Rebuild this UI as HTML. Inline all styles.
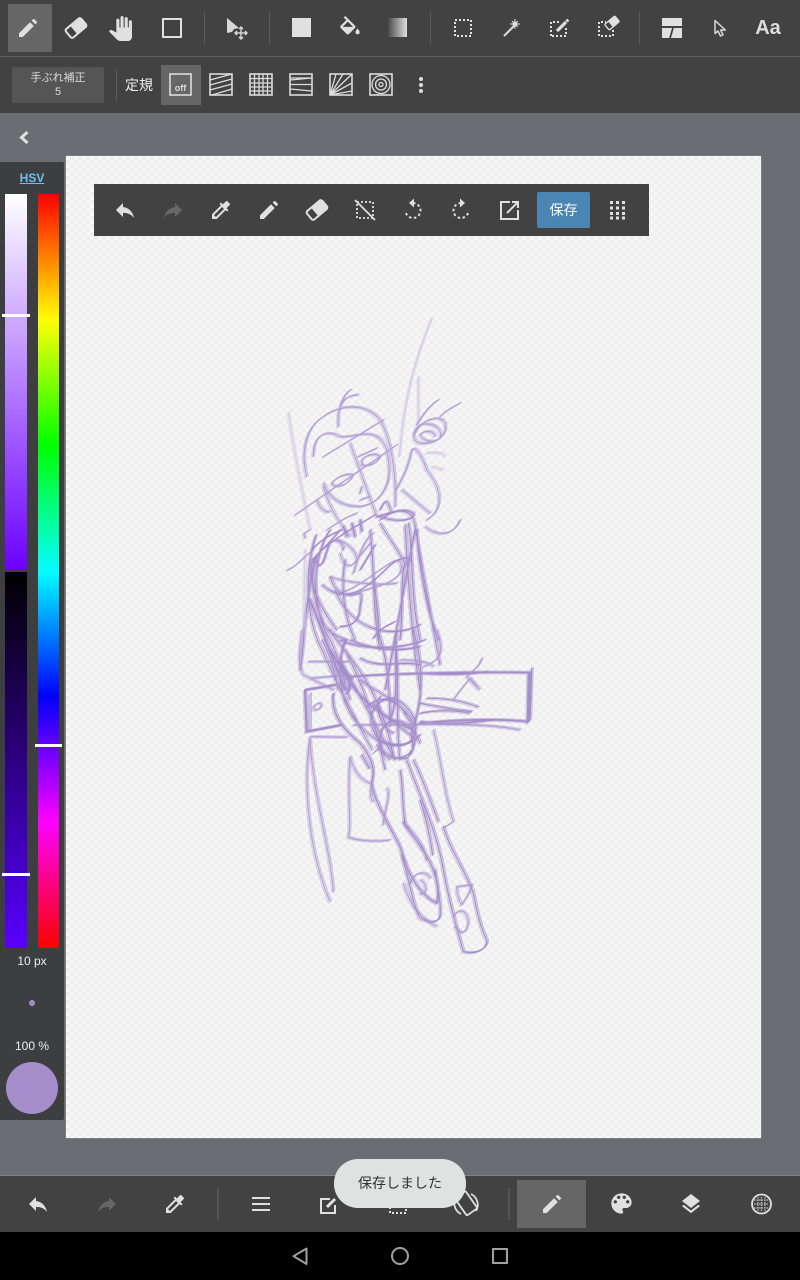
<!DOCTYPE html>
<html lang="ja"><head><meta charset="utf-8"><title>Sketch</title>
<style>
html,body{margin:0;padding:0;width:800px;height:1280px;overflow:hidden;background:#000}
body{position:relative;font-family:"Liberation Sans","Noto Sans CJK JP",sans-serif}
.a{position:absolute}
.t{position:absolute;white-space:nowrap;text-align:center}
svg{position:absolute;left:0;top:0}
</style></head><body>
<div class="a" style="left:0;top:113px;width:800px;height:1063px;background:#6a6d71"></div>
<div class="a" style="left:0;top:0;width:800px;height:113px;background:#424242;border-bottom:1px solid #6e6e70;box-sizing:content-box"></div>
<div class="a" style="left:0;top:56px;width:800px;height:1px;background:#5c5c5c"></div>
<div class="a" style="left:8px;top:4px;width:44px;height:48px;background:#666"></div>
<div class="a" style="left:161px;top:65px;width:40px;height:40px;background:#666"></div>
<div class="a" style="left:12px;top:67px;width:92px;height:36px;background:#555;border-radius:2px"></div>
<div class="t" style="left:12px;top:71px;width:92px;font-size:11px;line-height:14px;color:#ddd">手ぶれ補正<br>5</div>
<div class="t" style="left:123px;top:76px;width:32px;font-size:14px;line-height:18px;color:#eee">定規</div>

<div class="a" style="left:66px;top:156px;width:695px;height:982px;background-color:#f3f3f3;background-image:repeating-conic-gradient(#efefef 0 25%,#f6f6f6 0 50%);background-size:8px 8px;box-shadow:0 0 1px #bbb"></div>

<div class="a" style="left:0;top:162px;width:64px;height:958px;background:#3c3e40;border-radius:0 2px 2px 0"></div>
<div class="t" style="left:0;top:171px;width:64px;font-size:12px;line-height:15px;font-weight:bold;color:#6cc0ee;text-decoration:underline">HSV</div>
<div class="a" style="left:5px;top:194px;width:22px;height:376px;background:linear-gradient(#fff,#6c00ff)"></div>
<div class="a" style="left:5px;top:572px;width:22px;height:376px;background:linear-gradient(#000,#5800ff)"></div>
<div class="a" style="left:38px;top:194px;width:21px;height:754px;background:linear-gradient(#f00,#ff0 16.67%,#0f0 33.33%,#0ff 50%,#00f 66.67%,#f0f 83.33%,#f00)"></div>
<div class="a" style="left:2px;top:314px;width:28px;height:3px;background:#fff"></div>
<div class="a" style="left:35px;top:744px;width:27px;height:3px;background:#fff"></div>
<div class="a" style="left:2px;top:873px;width:28px;height:3px;background:#fff"></div>
<div class="t" style="left:0;top:954px;width:64px;font-size:12px;line-height:15px;color:#eee">10 px</div>
<div class="a" style="left:29px;top:1000px;width:6px;height:6px;border-radius:50%;background:#a58ccb"></div>
<div class="t" style="left:0;top:1039px;width:64px;font-size:12px;line-height:15px;color:#eee">100 %</div>
<div class="a" style="left:6px;top:1062px;width:52px;height:52px;border-radius:50%;background:#a58ccb"></div>

<div class="a" style="left:94px;top:184px;width:555px;height:52px;background:#424242"></div>
<div class="a" style="left:537px;top:192px;width:53px;height:36px;background:#4a85b4;border-radius:2px"></div>
<div class="t" style="left:537px;top:201px;width:53px;font-size:14px;line-height:18px;color:#fff">保存</div>

<div class="a" style="left:0;top:1175px;width:800px;height:1px;background:#808285"></div>
<div class="a" style="left:0;top:1176px;width:800px;height:56px;background:#424242"></div>
<div class="a" style="left:517px;top:1180px;width:69px;height:48px;background:#666"></div>
<div class="a" style="left:0;top:1232px;width:800px;height:48px;background:#000"></div>

<svg width="800" height="1280" viewBox="0 0 800 1280" fill="none">
<defs>
<symbol id="pen" viewBox="0 0 24 24"><path fill="#e0e0e0" d="M3 17.250V21h3.750L17.810 9.940l-3.750-3.750L3 17.250zM20.710 7.040c.39-.39.39-1.020 0-1.410l-2.340-2.340c-.39-.39-1.020-.39-1.410 0l-1.300 1.300 3.750 3.750 1.300-1.300z"/></symbol>
<symbol id="era" viewBox="0 0 24 24"><g transform="rotate(-40 12 12)"><rect x="2" y="6.500" width="20" height="11" rx="2" fill="none" stroke="#e0e0e0" stroke-width="2"/><path fill="#e0e0e0" d="M9 6h11a2.500 2.500 0 0 1 2.500 2.500v7A2.500 2.500 0 0 1 20 18H9z"/></g></symbol>
<symbol id="undo" viewBox="0 0 24 24"><path fill="#e0e0e0" d="M10 9V5l-7 7 7 7v-4.100c5 0 8.500 1.600 11 5.100-1-5-4-10-11-11z"/></symbol>
<symbol id="redo" viewBox="0 0 24 24"><path fill="#666" d="M14 9V5l7 7-7 7v-4.100c-5 0-8.500 1.600-11 5.100 1-5 4-10 11-11z"/></symbol>
<symbol id="drop" viewBox="0 0 24 24"><path fill="#e0e0e0" d="M20.710 5.630l-2.340-2.340c-.39-.39-1.020-.39-1.410 0l-3.120 3.120-1.930-1.910-1.410 1.410 1.420 1.420L3 16.250V21h4.750l8.920-8.920 1.420 1.420 1.410-1.410-1.920-1.920 3.120-3.120c.4-.4.4-1.030.01-1.420zM6.920 19L5 17.080l8.060-8.060 1.920 1.920L6.920 19z"/></symbol>
<linearGradient id="gr"><stop offset="0" stop-color="#4a4a4a"/><stop offset="1" stop-color="#e0e0e0"/></linearGradient>
</defs>

<!-- top row -->
<use href="#pen" x="16" y="16" width="24" height="24"/>
<use href="#era" x="64" y="16" width="24" height="24"/>
<svg x="108" y="16" width="25" height="25" viewBox="0 0 24 24"><path fill="#e0e0e0" d="M23 5.500V20c0 2.200-1.800 4-4 4h-7.300c-1.080 0-2.100-.43-2.850-1.190L1 14.830s1.260-1.230 1.300-1.250c.22-.19.49-.29.79-.29.22 0 .42.06.6.16.04.01 4.310 2.460 4.310 2.460V4c0-.83.67-1.500 1.500-1.500S11 3.170 11 4v7h1V1.500c0-.83.67-1.500 1.500-1.500S15 .67 15 1.500V11h1V2.500c0-.83.67-1.500 1.500-1.500s1.500.67 1.500 1.500V11h1V5.500c0-.83.67-1.500 1.500-1.500s1.500.67 1.500 1.500z"/></svg>
<rect x="163" y="19" width="18" height="18" stroke="#e0e0e0" stroke-width="2"/>
<path stroke="#5a5a5a" d="M204.500 12v32M269.500 12v32M430.500 12v32M639.500 12v32"/>
<path fill="#d8d8d8" d="M227 18l12 10-5 1-2 3-5 1z"/>
<path stroke="#d8d8d8" stroke-width="1.400" d="M241 27v12M235 33h12M239 29l2-2 2 2M239 37l2 2 2-2M237 31l-2 2 2 2M245 31l2 2-2 2"/>
<rect x="292" y="18" width="19" height="19" fill="#e0e0e0"/>
<svg x="337" y="16" width="26" height="26" viewBox="0 0 24 24"><path fill="#e0e0e0" d="M16.560 8.940L7.620 0 6.210 1.410l2.380 2.380-5.150 5.150c-.59.590-.59 1.540 0 2.120l5.500 5.500c.29.290.68.440 1.060.440s.77-.15 1.060-.44l5.500-5.500c.59-.58.59-1.530 0-2.120zM5.210 10L10 5.210 14.790 10H5.210zM19 11.500s-2 2.170-2 3.500c0 1.100.9 2 2 2s2-.9 2-2c0-1.330-2-3.500-2-3.500z"/></svg>
<rect x="388" y="18" width="19" height="19" fill="url(#gr)"/>
<rect x="455" y="20" width="16" height="16" stroke="#e0e0e0" stroke-width="2" stroke-dasharray="2 2"/>
<path stroke="#d8d8d8" stroke-width="2.200" d="M504 36l12-12"/>
<path stroke="#d8d8d8" stroke-width="1" d="M515 19v10M510 24h10M512 21l6 6M518 21l-6 6"/>
<circle cx="515" cy="24" r="2.500" fill="#e0e0e0"/>
<path stroke="#e0e0e0" stroke-width="2" stroke-dasharray="2 2" d="M551 36V22h8M566 28v8h-15"/>
<path stroke="#e0e0e0" stroke-width="3.200" d="M557 31l9-9"/><path stroke="#e0e0e0" stroke-width="3" d="M566.500 21.500l1.800-1.800"/>
<path stroke="#e0e0e0" stroke-width="2" stroke-dasharray="2 2" d="M599 36V22h7M613 30v6h-14"/>
<use href="#era" x="604" y="15" width="16" height="16"/>
<path fill="#e0e0e0" d="M662 18h20v8h-20zM662 28h20v10h-20z"/>
<path stroke="#424242" stroke-width="1.800" d="M673 28l-3 10"/>
<path fill="none" stroke="#d8d8d8" stroke-width="1.500" stroke-linejoin="round" d="M715 20.500v13l3-2.500 2.500 5 2.500-1.200-2.300-4.800h4.600z"/>

<!-- second row -->
<path stroke="#5a5a5a" d="M116.500 69v32"/>
<g stroke="#dcdcdc" stroke-width="1.300">
<rect x="170" y="74" width="21" height="21" stroke-width="1.600"/>
<rect x="210" y="74" width="22" height="21" stroke-width="1.600"/>
<path d="M210 80l22-6M210 85l22-6M210 90l22-6M212 95l20-6"/>
<rect x="250" y="74" width="22" height="21" stroke-width="1.600"/>
<path d="M254.500 74v21M259 74v21M263 74v21M267.500 74v21M250 78.500h22M250 83h22M250 87h22M250 91h22"/>
<rect x="290" y="74" width="22" height="21" stroke-width="1.600"/>
<path d="M290 80l22-2M290 84.500h22M290 89l22 2M290 78h22"/>
<rect x="330" y="74" width="22" height="21" stroke-width="1.600"/>
<path d="M330 95l6-21M330 95l13-21M330 95l22-21M330 95l22-12M330 95l22-4"/>
<rect x="370" y="74" width="22" height="21" stroke-width="1.600"/>
<circle cx="381" cy="84.500" r="9"/><circle cx="381" cy="84.500" r="5.500"/><circle cx="381" cy="84.500" r="2"/>
</g>
<circle cx="421" cy="79" r="2" fill="#ddd"/><circle cx="421" cy="85" r="2" fill="#ddd"/><circle cx="421" cy="91" r="2" fill="#ddd"/>
<path stroke="#e0e0e0" stroke-width="3" d="M27.500 132l-6 5.500 6 5.500"/>

<!-- float bar -->
<use href="#undo" x="113" y="198" width="24" height="24"/>
<use href="#redo" x="161" y="198" width="24" height="24"/>
<use href="#drop" x="209" y="198" width="24" height="24"/>
<use href="#pen" x="257" y="198" width="24" height="24"/>
<use href="#era" x="305" y="198" width="24" height="24"/>
<rect x="357" y="202" width="16" height="16" stroke="#e0e0e0" stroke-width="1.800" stroke-dasharray="2 2"/>
<path stroke="#e0e0e0" stroke-width="1.800" d="M355 200l20 20"/>
<path stroke="#e0e0e0" stroke-width="2" stroke-dasharray="2.500 2.500" d="M413 203a7.500 7.500 0 1 1-7.500 7.500"/>
<path fill="#e0e0e0" d="M414 198.500v9l-5-4.500z"/>
<path stroke="#e0e0e0" stroke-width="2" stroke-dasharray="2.500 2.500" d="M461 203a7.500 7.500 0 1 0 7.500 7.500"/>
<path fill="#e0e0e0" d="M460 198.500v9l5-4.500z"/>
<path stroke="#e0e0e0" stroke-width="2" d="M510 202h-9v17h17v-9"/>
<path stroke="#e0e0e0" stroke-width="2" d="M507 213l11-11M512 202h6v6"/>
<g fill="#e0e0e0">
<rect x="610" y="201" width="3" height="3"/><rect x="616" y="201" width="3" height="3"/><rect x="622" y="201" width="3" height="3"/>
<rect x="610" y="206.500" width="3" height="3"/><rect x="616" y="206.500" width="3" height="3"/><rect x="622" y="206.500" width="3" height="3"/>
<rect x="610" y="212" width="3" height="3"/><rect x="616" y="212" width="3" height="3"/><rect x="622" y="212" width="3" height="3"/>
<rect x="610" y="216.500" width="3" height="3"/><rect x="616" y="216.500" width="3" height="3"/><rect x="622" y="216.500" width="3" height="3"/>
</g>

<!-- sketch -->
<g id="sk">
<g transform="translate(280 310) scale(.33333)" stroke="#a48dcb" fill="none" stroke-linecap="round" stroke-width="4">
<g stroke="#d6cde6">
<path d="M455 25C420 110 370 250 358 440"/><path d="M415 200L415 330"/><path d="M25 310C40 420 70 560 90 660"/><path d="M75 720L70 990"/><path d="M440 430C470 425 490 430 495 440M455 470L490 480"/>
</g>
<g stroke="#b5a2d6">
<path d="M80 500C60 420 80 350 130 320C170 290 250 270 300 330C330 380 350 480 345 590"/>
<path d="M175 350C170 290 190 255 235 255M180 290C190 260 200 245 212 240"/>
<path d="M100 440C100 380 130 360 170 375C200 400 290 330 320 420C330 470 330 500 318 530"/>
<path d="M130 440L310 330M45 615L350 405M210 400L290 620M90 660L72 670L75 685"/>
<path d="M245 450C265 430 290 430 300 440C290 465 260 470 245 465ZM235 440L290 415M155 520C175 495 205 490 220 495C205 525 175 535 158 525Z"/>
<path d="M130 520C150 570 190 590 240 590C280 585 310 560 325 510"/>
<path d="M245 530L240 550M240 570L270 560M110 570C120 600 140 610 150 605"/>
<path d="M345 545C370 500 385 470 395 420C400 410 420 420 440 480C490 540 490 600 440 630"/>
<path d="M365 540L450 610M435 650C470 680 520 680 540 630M410 345C430 310 450 285 475 270M480 320C500 300 520 290 540 280"/>
<path d="M405 370C420 330 480 310 495 340C505 380 460 405 420 400C395 395 395 360 420 345C450 335 490 350 480 385C460 400 430 395 420 375C430 360 460 360 465 380"/>
<path d="M22 780C50 770 70 740 100 720"/>
<path d="M130 530C150 600 180 640 210 680M140 660C170 640 200 620 230 610"/>
<path d="M220 790C240 720 260 680 280 670M230 750L270 700"/>
<path d="M170 690C210 700 230 730 230 750C210 780 190 770 180 730"/>
<path d="M180 850C240 830 280 790 330 760C360 740 370 760 360 790C330 830 270 830 230 850"/>
<path d="M150 800C170 810 270 830 350 820"/>
</g>
<path d="M290 620C330 610 370 590 400 610C410 630 350 640 300 620ZM300 600C320 560 320 570 335 610"/>
<path d="M110 740C85 800 100 870 130 940C150 970 170 980 200 990"/>
<path d="M180 660C150 700 110 730 95 760C85 810 110 880 170 960"/>
<path d="M95 720C120 690 160 670 185 660"/>
<path d="M300 640C330 690 360 730 375 760C360 810 370 900 360 990"/>
<path d="M385 640C400 720 390 860 420 990M410 660C415 760 440 900 475 990"/>
<path d="M150 800C160 830 180 860 220 855C240 850 250 840 240 890C240 930 220 950 180 950"/>
<path d="M280 800C290 880 300 940 295 990M280 985C300 950 330 945 345 935"/>
<path d="M105 750C130 800 135 720 150 700C170 680 190 700 190 720"/>
<path d="M190 650L200 680M215 640L225 680M240 630L245 665" stroke-width="5"/>
</g>
<g transform="translate(280 630) scale(.33333)" stroke="#a48dcb" fill="none" stroke-linecap="round" stroke-width="4">
<g stroke="#b5a2d6">
<path d="M65 0C60 60 50 100 70 135L160 180M85 95L210 95M90 145L210 135"/>
<path d="M90 320C70 450 80 650 150 815M90 330C100 500 150 650 160 785"/>
<path d="M210 380C200 480 215 580 205 622C240 635 300 635 330 630"/>
<path d="M460 300C480 370 490 480 520 575L490 595"/>
<path d="M95 320L200 322M220 285C400 285 600 275 720 300"/>
<path d="M470 0C490 60 490 90 430 110M360 90C420 90 450 100 460 110"/>
<path d="M370 760C385 810 410 860 470 890M390 760C400 725 440 720 450 745M420 750C445 760 440 800 420 790"/>
<path d="M530 770L575 765C570 790 560 800 545 825C530 800 530 780 530 770ZM520 860C540 825 565 850 565 880C555 920 540 910 525 890"/>
<path d="M520 210C540 180 550 170 570 145L600 180L560 140C580 120 600 110 605 85"/>
<path d="M210 380C220 420 240 450 270 460M275 460C270 490 270 510 280 515M320 475C335 490 310 550 310 585"/>
<path d="M100 230C120 210 130 225 120 235C105 245 100 240 100 230"/>
<path d="M280 370C300 340 310 380 330 390M370 575C400 610 430 640 440 690"/>
</g>
<path d="M75 180L80 305L185 285M75 180L165 165" stroke-width="6"/>
<path d="M90 305L90 190" stroke-width="3"/>
<path d="M210 140C350 130 600 125 750 128L745 275C650 265 520 270 420 280" stroke-width="5"/>
<path d="M755 115L750 270M745 130L742 280" />
<path d="M430 130C500 135 560 135 620 125M420 275C500 285 560 280 640 270"/>
<path d="M160 190C150 250 190 300 240 340C280 390 285 420 275 460C280 510 330 590 360 650C380 720 410 790 470 820C480 780 470 730 440 680C420 640 380 600 370 575" stroke-width="4.500"/>
<path d="M380 390C420 500 470 600 490 720C510 830 540 930 550 965C580 975 625 960 620 930C600 890 590 840 580 790C560 730 510 660 490 590"/>
<path d="M365 675C390 760 400 830 420 865C440 875 470 885 480 860C485 820 470 770 465 720"/>
<path d="M400 390C430 450 450 510 475 575M420 510C440 570 450 620 458 675M360 420C370 470 365 520 375 580"/>
<path d="M150 60L200 140C230 200 300 260 400 300" stroke-width="5"/>
<path d="M150 0C180 60 300 150 340 380M200 30C170 80 180 130 220 170M290 0C320 60 330 180 330 290"/>
<path d="M400 0C430 100 430 200 400 290C380 330 420 350 380 385C340 390 300 370 290 345M350 0C340 80 360 200 330 270"/>
<path d="M260 230C300 190 360 210 380 260C420 320 410 380 350 385C300 380 290 330 310 290C340 250 400 280 420 340"/>
<path d="M300 200C280 240 310 300 340 310M280 220C320 270 360 290 410 330"/>
<path d="M190 110C210 150 215 180 200 190M180 100L215 150" stroke-width="6"/>
<path d="M420 220C470 230 530 240 575 245M440 205C490 205 540 210 595 232M420 250C470 240 520 240 570 250" stroke-width="3.500"/>
<path d="M210 30C300 70 380 60 420 50M240 85C300 120 360 90 420 105"/>
<path d="M245 375L268 415" stroke-width="4.500"/>
</g>
<g stroke="#a48dcb" fill="none" stroke-linecap="round" stroke-width="1.300">
<path d="M316 535C304 570 306 620 322 650C335 680 345 700 372 750"/>
<path d="M330 530C310 560 312 610 330 640C345 670 345 690 350 700"/>
<path d="M312 560C330 540 350 530 375 515M380 520C400 505 412 510 415 525C420 560 430 610 440 665"/>
<path d="M405 525C408 580 412 640 420 690M415 530C405 580 395 640 385 690"/>
<path d="M322 585C345 605 365 590 385 570C395 560 405 555 410 560M335 590C350 630 390 640 420 625"/>
<path d="M340 640C360 650 400 650 425 640M345 640C335 670 340 700 355 720C375 745 400 755 420 735"/>
<path d="M360 680C380 695 400 700 415 725M385 700C370 705 365 725 380 740C400 750 420 745 415 720C405 700 390 695 385 700"/>
<path d="M340 660L395 760M345 650C365 690 375 720 385 770M395 640C400 680 395 720 400 760"/>
<path d="M310 600L345 690" stroke-width="1.800"/>
<path d="M300 670C305 640 305 600 315 560"/>
<path d="M345 560C340 590 345 620 355 640M370 530C375 570 372 610 380 650M360 570L375 545"/>
<path d="M322 640C330 655 335 670 338 690"/>
</g>
</g>
<use href="#sk" transform="translate(1.500 -1)" opacity=".55"/>
<use href="#sk" transform="translate(-1.500 1.200)" opacity=".4"/>

<!-- bottom bar -->
<use href="#undo" x="26" y="1192" width="24" height="24"/>
<use href="#redo" x="95" y="1192" width="24" height="24"/>
<use href="#drop" x="163" y="1192" width="24" height="24"/>
<path stroke="#555" stroke-width="2" d="M218 1188v32M509 1188v32"/>
<path fill="#e0e0e0" d="M252 1197h18v2h-18zM252 1203h18v2h-18zM252 1209h18v2h-18z"/>
<path stroke="#e0e0e0" stroke-width="2" d="M330 1199h-9v14h14v-8"/>
<path stroke="#e0e0e0" stroke-width="3" d="M327 1207l8-8"/>
<rect x="390" y="1197" width="16" height="16" stroke="#e0e0e0" stroke-width="2" stroke-dasharray="2 2"/>
<g stroke="#e0e0e0" stroke-width="1.800"><rect x="460" y="1193" width="13" height="21" rx="1" transform="rotate(-35 466 1204)"/><path d="M456 1197a12 12 0 0 0 5 17M476 1211a12 12 0 0 0-5-17"/></g>
<use href="#pen" x="540" y="1192" width="24" height="24"/>
<svg x="608" y="1190" width="27" height="27" viewBox="0 0 24 24"><path fill="#e0e0e0" d="M12 3c-4.970 0-9 4.030-9 9s4.030 9 9 9c.83 0 1.500-.67 1.500-1.500 0-.39-.15-.74-.39-1.010-.23-.26-.38-.61-.38-.99 0-.83.67-1.500 1.500-1.500H16c2.760 0 5-2.240 5-5 0-4.420-4.030-8-9-8zm-5.500 9c-.83 0-1.500-.67-1.500-1.500S5.670 9 6.500 9 8 9.670 8 10.500 7.330 12 6.500 12zm3-4C8.670 8 8 7.330 8 6.500S8.670 5 9.500 5s1.500.67 1.500 1.500S10.330 8 9.500 8zm5 0c-.83 0-1.500-.67-1.500-1.500S13.670 5 14.500 5s1.500.67 1.500 1.500S15.330 8 14.500 8zm3 4c-.83 0-1.500-.67-1.500-1.500S16.670 9 17.500 9s1.500.67 1.500 1.500-.67 1.500-1.500 1.500z"/></svg>
<svg x="679" y="1192" width="24" height="24" viewBox="0 0 24 24"><path fill="#e0e0e0" d="M11.990 18.540l-7.370-5.730L3 14.070l9 7 9-7-1.630-1.270-7.380 5.740zM12 16l7.360-5.730L21 9l-9-7-9 7 1.630 1.270L12 16z"/></svg>
<circle cx="761.500" cy="1204" r="9.500" stroke="#e0e0e0" stroke-width="1.800"/>
<path stroke="#bdbdbd" stroke-width="1.200" stroke-dasharray="1.500 1" d="M754 1200h15M754 1204h15M754 1208h15M758 1197v14M761.500 1197v14M765 1197v14"/>

<!-- nav -->
<path stroke="#a0a0a0" stroke-width="2" stroke-linejoin="round" d="M306.500 1248.500v15.500l-13-7.800z"/>
<circle cx="400" cy="1256" r="8" stroke="#a0a0a0" stroke-width="2"/>
<rect x="493" y="1249" width="14" height="14" stroke="#a0a0a0" stroke-width="2"/>
</svg>

<div class="a" style="left:334px;top:1159px;width:132px;height:49px;border-radius:24px;background:#e0e1e1"></div>
<div class="t" style="left:334px;top:1174px;width:132px;font-size:14px;line-height:18px;color:#333">保存しました</div>
<div class="t" style="left:170px;top:83px;width:21px;font-size:9px;line-height:10px;font-weight:bold;color:#ddd">off</div>
<div class="t" style="left:750px;top:17px;width:36px;font-size:20px;line-height:22px;font-weight:bold;color:#ddd">Aa</div>
</body></html>
